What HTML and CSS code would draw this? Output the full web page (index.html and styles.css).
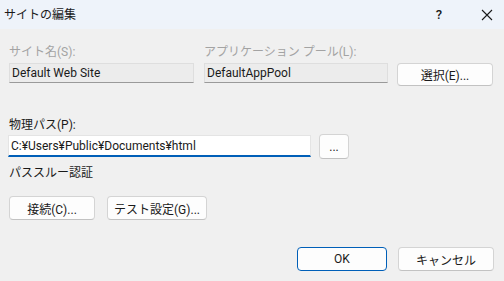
FILE: index.html
```html
<!DOCTYPE html>
<html lang="ja">
<head>
  <meta charset="UTF-8">
  <title>サイトの編集</title>
  <link rel="stylesheet" href="styles.css">
</head>
<body>
  <div class="dialog">
    <div class="titlebar">
      <span class="title">サイトの編集</span>
      <span class="help">?</span>
      <svg class="close" width="12" height="12" viewBox="0 0 12 12">
        <path d="M1 1 L11 11 M11 1 L1 11" stroke="#1a1a1a" stroke-width="1.1" fill="none"/>
      </svg>
    </div>

    <div class="content">
      <div class="row-top">
        <div class="field site-field">
          <label class="label disabled">サイト名(S):</label>
          <div class="readonly">Default Web Site</div>
        </div>
        <div class="field pool-field">
          <label class="label disabled">アプリケーション プール(L):</label>
          <div class="readonly">DefaultAppPool</div>
        </div>
        <button class="btn select-btn">選択(E)...</button>
      </div>

      <div class="path-block">
        <label class="label">物理パス(P):</label>
        <div class="path-row">
          <div class="path-input">C:¥Users¥Public¥Documents¥html</div>
          <button class="btn browse-btn">...</button>
        </div>
      </div>

      <div class="label pass-label">パススルー認証</div>

      <div class="auth-row">
        <button class="btn connect-btn">接続(C)...</button>
        <button class="btn test-btn">テスト設定(G)...</button>
      </div>

      <div class="footer">
        <button class="btn ok-btn">OK</button>
        <button class="btn cancel-btn">キャンセル</button>
      </div>
    </div>
  </div>
</body>
</html>
```

FILE: styles.css
```css
* {
  margin: 0;
  padding: 0;
  box-sizing: border-box;
}

body {
  width: 504px;
  height: 281px;
  background: #f0f0f0;
  font-family: Roboto, 'Noto Sans CJK JP', sans-serif;
  font-size: 12px;
  color: #1a1a1a;
  overflow: hidden;
}

.titlebar {
  height: 29px;
  background: #eef3fa;
  display: flex;
  align-items: center;
  padding-left: 4px;
}

.title {
  flex: 1;
  line-height: 16px;
}

.help {
  width: 12px;
  margin-right: 36px;
  text-align: center;
  font-size: 13px;
  font-weight: 500;
}

.close {
  margin-right: 11px;
}

.content {
  padding: 0 10px 0 9px;
}

.label {
  display: block;
  line-height: 16px;
  height: 16px;
}

.disabled {
  color: #a3a3a3;
}

.row-top {
  display: flex;
  align-items: flex-start;
  margin-top: 15px;
}

.site-field {
  width: 185px;
}

.pool-field {
  width: 184px;
  margin-left: 10px;
}

.readonly {
  margin-top: 3px;
  height: 20px;
  line-height: 18px;
  padding-left: 2px;
  background: #ececec;
  border: 1px solid #dedede;
  border-bottom-color: #9a9a9a;
  white-space: nowrap;
}

.btn {
  font-family: inherit;
  font-size: 12px;
  color: #1a1a1a;
  background: #fdfdfd;
  border: 1px solid #d4d4d4;
  border-bottom-color: #c2c2c2;
  border-radius: 4px;
  height: 24px;
}

.select-btn {
  width: 96px;
  height: 23px;
  margin-left: 9px;
  margin-top: 19px;
}

.path-block {
  margin-top: 31px;
}

.path-row {
  display: flex;
  align-items: flex-start;
  margin-top: 2px;
}

.path-input {
  width: 303px;
  margin-left: -1px;
  height: 22px;
  line-height: 20px;
  padding-left: 2px;
  background: #ffffff;
  border: 1px solid #e4e4e4;
  border-bottom: 2px solid #005fb8;
  white-space: nowrap;
}

.browse-btn {
  width: 30px;
  height: 25px;
  margin-left: 8px;
  margin-top: -1px;
  line-height: 14px;
}

.pass-label {
  margin-top: 6px;
}

.auth-row {
  display: flex;
  margin-top: 15px;
}

.connect-btn {
  width: 86px;
}

.test-btn {
  width: 100px;
  margin-left: 12px;
}

.footer {
  display: flex;
  justify-content: flex-end;
  margin-top: 27px;
}

.ok-btn {
  width: 90px;
  border: 1px solid #005fb8;
}

.cancel-btn {
  width: 96px;
  margin-left: 11px;
}
```
